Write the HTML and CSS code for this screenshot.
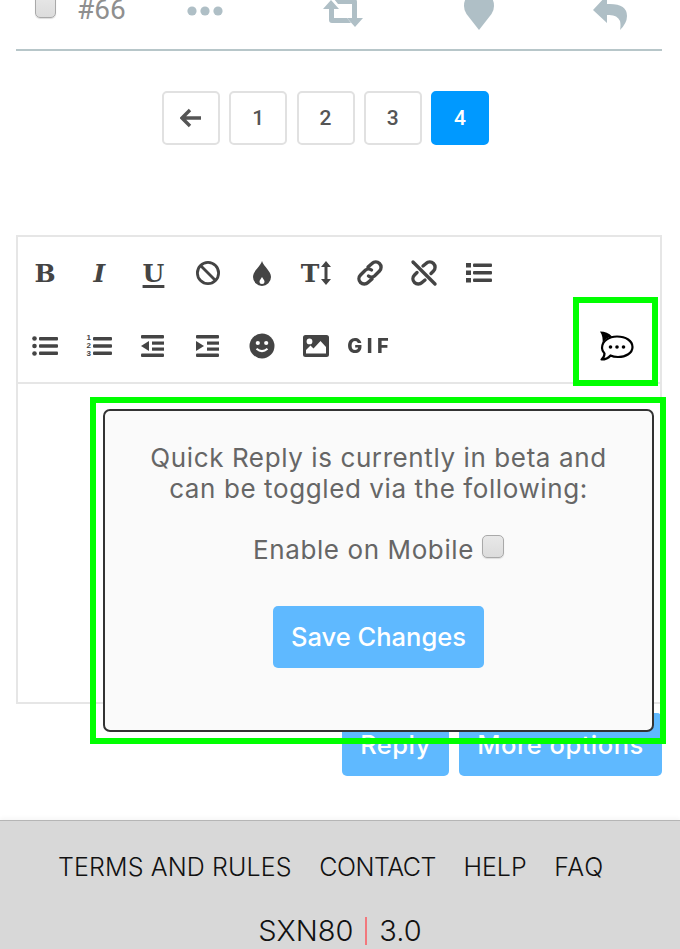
FILE: index.html
```html
<!DOCTYPE html>
<html lang="en">
<head>
<meta charset="utf-8">
<title>Quick Reply</title>
<link rel="stylesheet" href="styles.css">
</head>
<body>
<div class="page">
  <main class="content">
    <div class="post-actions">
      <span class="fake-check"></span>
      <span class="post-num">#66</span>
      <svg class="a-dots" width="36" height="12" viewBox="0 0 36 12"><circle cx="5" cy="6" r="4.6"/><circle cx="18" cy="6" r="4.6"/><circle cx="31" cy="6" r="4.6"/></svg>
      <svg class="a-rt" width="40" height="40" viewBox="0 0 40 40"><path d="M0 18 L8 9 L16 18 H11 V27 H24 L28 32 H9 Q6 32 6 29 V18 Z"/><path d="M40 27 L32 36 L24 27 H29 V13 H15 L11 8 H31 Q34 8 34 11 V27 Z"/></svg>
      <svg class="a-heart" width="30" height="35" viewBox="0 0 30 35"><path d="M15 35 L2.500 19 Q0 15.500 0 11 Q0 1 8 1 Q13 1 15 5 Q17 1 22 1 Q30 1 30 11 Q30 15.500 27.500 19 Z"/></svg>
      <svg class="a-reply" width="34" height="40" viewBox="0 0 34 40"><path d="M14 5 L0 20 L14 33 V25 Q24 24 27 31 Q28 35 27 40 Q34 33 34 26 Q34 13 14 14 Z"/></svg>
    </div>

    <nav class="pager">
      <a class="page-btn"><svg width="22" height="20" viewBox="0 0 22 20"><path d="M10 2 L2 10 L10 18 M2.5 10 H21" fill="none" stroke="#555" stroke-width="3.4"/></svg></a>
      <a class="page-btn">1</a>
      <a class="page-btn">2</a>
      <a class="page-btn">3</a>
      <a class="page-btn page-active">4</a>
    </nav>

    <section class="editor">
      <div class="toolbar">
        <div class="tool-row">
          <span class="tool tool-b">B</span>
          <span class="tool tool-i">I</span>
          <span class="tool tool-u">U</span>
          <span class="tool"><svg width="26" height="26" viewBox="0 0 26 26"><circle cx="13" cy="13" r="10.6" fill="none" stroke="#444" stroke-width="2.8"/><path d="M5.5 5.5 L20.5 20.5" stroke="#444" stroke-width="2.8"/></svg></span>
          <span class="tool"><svg width="20" height="26" viewBox="0 0 20 26"><path fill-rule="evenodd" fill="#444" d="M10 1 C12 7 19 11 19 17 A9 9 0 0 1 1 17 C1 11 8 7 10 1 Z M10 17 C9 19 7.5 20 7.5 21.5 A2.5 2.5 0 0 0 12.5 21.5 C12.500 20 11 19 10 17 Z"/></svg></span>
          <span class="tool tool-size"><span class="tool-t">T</span><svg width="10" height="24" viewBox="0 0 10 24"><path fill="#444" d="M5 0 L10 6 H6.500 V18 H10 L5 24 L0 18 H3.500 V6 H0 Z"/></svg></span>
          <span class="tool"><svg width="28" height="28" viewBox="0 0 28 28"><g fill="none" stroke="#444" stroke-width="3.400" stroke-linecap="round"><path d="M12 8 L16 4.500 A5 5 0 0 1 23.500 12 L18.500 17 A5 5 0 0 1 12.500 17"/><path d="M16 20 L12 23.500 A5 5 0 0 1 4.500 16 L9.500 11 A5 5 0 0 1 15.500 11"/></g></svg></span>
          <span class="tool"><svg width="28" height="28" viewBox="0 0 28 28"><g fill="none" stroke="#444" stroke-width="3.400" stroke-linecap="round"><path d="M13 7 L16 4.500 A5 5 0 0 1 23.500 12 L21 14.500"/><path d="M15 21 L12 23.500 A5 5 0 0 1 4.500 16 L7 13.500"/><path d="M3 3 L25 25"/></g></svg></span>
          <span class="tool"><svg width="26" height="20" viewBox="0 0 26 20"><g fill="#444"><rect y="0" width="5" height="4.500"/><rect y="7.500" width="5" height="4.500"/><rect y="15" width="5" height="4.500"/><rect x="7" y="0.500" width="19" height="3.500" rx="1"/><rect x="7" y="8" width="19" height="3.500" rx="1"/><rect x="7" y="15.500" width="19" height="3.500" rx="1"/></g></svg></span>
        </div>
        <div class="tool-row">
          <span class="tool"><svg width="26" height="20" viewBox="0 0 26 20"><g fill="#444"><circle cx="2.500" cy="2.500" r="2.300"/><circle cx="2.500" cy="10" r="2.300"/><circle cx="2.500" cy="17.500" r="2.300"/><rect x="7" y="1" width="19" height="3.500" rx="1"/><rect x="7" y="8.200" width="19" height="3.500" rx="1"/><rect x="7" y="15.500" width="19" height="3.500" rx="1"/></g></svg></span>
          <span class="tool tool-ol"><span class="ol-nums"><span>1</span><span>2</span><span>3</span></span><svg width="19" height="20" viewBox="0 0 19 20"><g fill="#444"><rect y="1" width="19" height="3.500" rx="1"/><rect y="8.200" width="19" height="3.500" rx="1"/><rect y="15.500" width="19" height="3.500" rx="1"/></g></svg></span>
          <span class="tool"><svg width="24" height="24" viewBox="0 0 24 24"><g fill="#444"><rect y="1" width="23" height="3.500" rx="1"/><rect x="11" y="7.500" width="12" height="3.200"/><rect x="11" y="13.500" width="12" height="3.200"/><rect y="19.500" width="23" height="3.500" rx="1"/><path d="M8 7 V17 L0 12 Z"/></g></svg></span>
          <span class="tool"><svg width="24" height="24" viewBox="0 0 24 24"><g fill="#444"><rect y="1" width="23" height="3.500" rx="1"/><rect x="11" y="7.500" width="12" height="3.200"/><rect x="11" y="13.500" width="12" height="3.200"/><rect y="19.500" width="23" height="3.500" rx="1"/><path d="M0 7 V17 L8 12 Z"/></g></svg></span>
          <span class="tool"><svg width="26" height="26" viewBox="0 0 26 26"><circle cx="13" cy="13" r="12.500" fill="#444"/><circle cx="8.800" cy="10" r="2.100" fill="#fff"/><circle cx="17.200" cy="10" r="2.100" fill="#fff"/><path d="M7.500 15.800 Q13 20.500 18.500 15.800" fill="none" stroke="#fff" stroke-width="2"/></svg></span>
          <span class="tool"><svg width="26" height="22" viewBox="0 0 26 22"><path fill-rule="evenodd" fill="#444" d="M2.500 0 H23.500 Q26 0 26 2.500 V19.500 Q26 22 23.500 22 H2.500 Q0 22 0 19.500 V2.500 Q0 0 2.500 0 Z M6.500 3.500 A2.900 2.900 0 1 0 6.501 9.300 A2.900 2.900 0 1 0 6.500 3.500 Z M3 18.500 H23 V12 L17.500 6 L10.500 13.500 L7.500 10.500 L3 15 Z"/></svg></span>
          <span class="tool tool-gif">GIF</span>
          <span class="tool tool-rocket"><svg width="36" height="32" viewBox="0 0 36 32"><path d="M4 18 C4 11 11 6.500 19 6.500 C28 6.500 34.500 11 34.500 17 C34.500 23 28 27 20 27 C17 27 14.500 26.500 12.500 25.500 C10.500 28 7 29.500 3.500 29.500 C6 27.500 6.500 25 6.500 23.500 C5 22 4 20 4 18 Z" fill="#fff" stroke="#000" stroke-width="2.200" stroke-linejoin="round"/><path d="M2 1.500 C7 1.500 11 3 14 6.500 C9 7.500 6 10 4.500 13.500 C5 9 4.500 5 2 1.500 Z" fill="#000"/><circle cx="12.500" cy="17" r="1.800"/><circle cx="19" cy="17" r="1.800"/><circle cx="25.500" cy="17" r="1.800"/></svg></span>
        </div>
      </div>
      <div class="edit-area"></div>
    </section>

    <div class="submit-row">
      <button class="btn btn-reply">Reply</button>
      <button class="btn btn-more">More options</button>
    </div>
  </main>

  <footer class="footer">
    <ul class="footer-links">
      <li class="link-terms">TERMS AND RULES</li>
      <li class="link-contact">CONTACT</li>
      <li>HELP</li>
      <li class="link-faq">FAQ</li>
    </ul>
    <p class="brand"><span>SXN80</span><i class="brand-sep"></i><span>3.0</span></p>
  </footer>

  <div class="mark mark-icon"></div>
  <div class="mark mark-dialog"></div>
  <div class="dialog">
    <p class="dialog-text">Quick Reply is currently in beta and<br>can be toggled via the following:</p>
    <p class="dialog-toggle"><span>Enable on Mobile</span><span class="fake-check dialog-check"></span></p>
    <button class="btn btn-save">Save Changes</button>
  </div>
</div>
</body>
</html>
```

FILE: styles.css
```css
* { box-sizing: border-box; }
html, body { margin: 0; padding: 0; background: #fff; }
body { font-family: Inter, "Liberation Sans", sans-serif; }

.page {
  position: relative;
  width: 680px;
  height: 949px;
  overflow: hidden;
  display: flex;
  flex-direction: column;
}

.content {
  height: 820px;
  padding: 0 18px 0 16px;
  display: flex;
  flex-direction: column;
}

/* post actions, cut by the top edge of the viewport */
.post-actions {
  flex: none;
  position: relative;
  height: 51px;
  border-bottom: 2px solid #b7c6c9;
  display: flex;
  align-items: flex-end;
  fill: #afbfc6;
}
.fake-check {
  display: block;
  flex: none;
  width: 21px;
  height: 24px;
  background: linear-gradient(#e8e8e8, #dcdcdc);
  border: 1px solid #a9a9a9;
  border-radius: 5px;
  box-shadow: 0 1px 1px #ddd;
}
.post-actions .fake-check { margin: 0 0 31px 19px; }
.post-num {
  margin: 0 0 25px 21px;
  width: 47px;
  font: 400 28px/28px Roboto, sans-serif;
  color: #8f8f8f;
}
.a-dots { margin: 0 0 32px 63px; }
.a-rt { margin: 0 0 18px 100px; }
.a-heart { margin: 0 0 19px 101px; }
.a-reply { margin: 0 0 19px 99px; }

/* pager */
.pager {
  flex: none;
  margin: 40px 0 0 146px;
  height: 54px;
  display: flex;
  gap: 9.250px;
}
.page-btn {
  width: 58px;
  height: 54px;
  border: 2px solid #e1e1e1;
  border-radius: 5px;
  display: flex;
  align-items: center;
  justify-content: center;
  font: 500 21px/1 Roboto, sans-serif;
  color: #555;
}
.page-active { background: #0099ff; border-color: #0099ff; color: #fff; }

/* editor */
.editor {
  flex: none;
  margin-top: 90px;
  height: 469px;
  border: 2px solid #e6e6e6;
  display: flex;
  flex-direction: column;
}
.toolbar {
  flex: none;
  height: 147px;
  border-bottom: 2px solid #e6e6e6;
}
.tool-row {
  height: 73px;
  display: flex;
  align-items: center;
}
.tool-row:first-child { height: 72px; }
.tool {
  flex: none;
  width: 54.200px;
  height: 40px;
  display: flex;
  align-items: center;
  justify-content: center;
  color: #444;
  line-height: 1;
}
.tool-b, .tool-i, .tool-u, .tool-t {
  font-family: "DejaVu Serif", serif;
  font-weight: 700;
  font-size: 25px;
}
.tool-i { font-style: italic; }
.tool-u { text-decoration: underline; text-underline-offset: 3px; text-decoration-thickness: 3px; }
.tool-size { gap: 2px; }
.tool-ol { gap: 2px; }
.ol-nums {
  display: flex;
  flex-direction: column;
  font: 700 8px/8px "Liberation Sans", sans-serif;
}
.tool-gif {
  font: 800 20px/1 Inter, sans-serif;
  letter-spacing: 4.500px;
  color: #444;
  filter: blur(0.500px);
}
.tool-rocket { margin-left: 192px; }
.edit-area { flex: 1; }

/* buttons */
.btn {
  border: 0;
  border-radius: 5px;
  background: #5fb9ff;
  color: #fff;
  font: 500 25.500px/1 Inter, sans-serif;
  letter-spacing: 0.500px;
  padding: 0;
}
.submit-row {
  flex: none;
  margin-top: 9px;
  display: flex;
  justify-content: flex-end;
  gap: 10px;
}
.btn-reply { width: 107px; height: 63px; padding-top: 1px; }
.btn-more { width: 203px; height: 63px; padding-top: 1px; }

/* footer */
.footer {
  flex: none;
  height: 129px;
  background: #d8d8d8;
  border-top: 1px solid #b5b5b5;
  box-shadow: 0 -2px 4px rgba(0, 0, 0, 0.04);
  color: #111;
}
.footer-links {
  list-style: none;
  margin: 0;
  padding: 31px 0 0 58px;
  display: flex;
  gap: 27.500px;
  font: 300 25px/30px Inter, sans-serif;
}
.link-terms { letter-spacing: 0.130px; }
.link-contact { letter-spacing: -0.500px; }
.link-faq { letter-spacing: 0.800px; }
.brand {
  margin: 32px 0 0;
  display: flex;
  justify-content: center;
  align-items: center;
  gap: 12px;
  font: 300 29px/34px Inter, sans-serif;
}
.brand-sep { width: 2px; height: 28px; background: #f2787d; }

/* annotations and dialog lying over the page */
.mark { position: absolute; border: 6px solid #00ff00; pointer-events: none; }
.mark-icon { left: 573px; top: 297px; width: 85px; height: 89px; }
.mark-dialog { left: 90px; top: 397px; width: 576px; height: 347px; }
.dialog {
  position: absolute;
  left: 103px;
  top: 409px;
  width: 551px;
  height: 323px;
  background: #fafafa;
  border: 2px solid #333;
  border-radius: 7px;
  padding-top: 31px;
  display: flex;
  flex-direction: column;
  align-items: center;
  color: #666;
  font-size: 26px;
  letter-spacing: 0.600px;
  text-align: center;
}
.dialog-text { margin: 0; line-height: 31px; }
.dialog-toggle {
  margin: 31px 0 0;
  display: flex;
  align-items: flex-start;
  gap: 8px;
  line-height: 30px;
}
.dialog-check { margin-top: 0; width: 22px; height: 23px; }
.btn-save { margin-top: 41px; width: 211px; height: 62px; letter-spacing: 0; }
```
